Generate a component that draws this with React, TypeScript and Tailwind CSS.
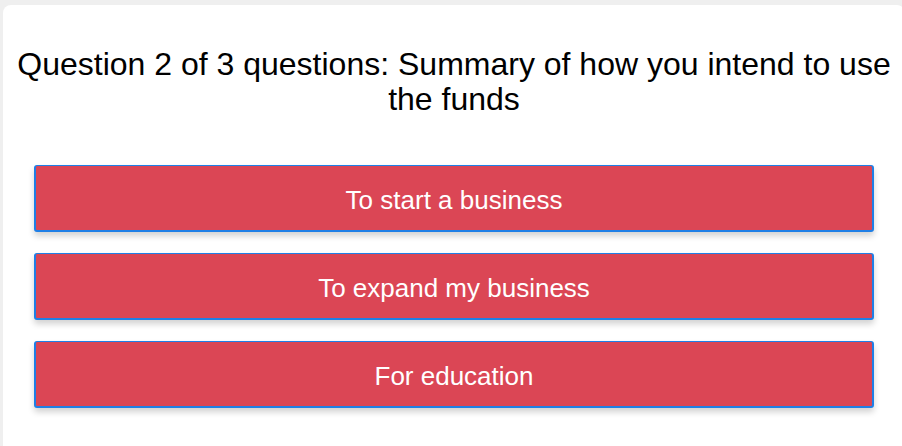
import React from "react";

const options = ["To start a business", "To expand my business", "For education"];

export default function App() {
  return (
    <div className="w-[902px] h-[446px] overflow-hidden bg-[#efefef] pt-[5px] pl-[3px]" style={{ fontFamily: '"Liberation Sans", Arial, sans-serif' }}>
      <div className="w-[902px] h-[460px] bg-white rounded-[8px] px-[31px] pt-[42px]">
        <h1 className="text-center text-[32px] leading-[35px] text-black -mx-[20px]">
          Question 2 of 3 questions: Summary of how you intend to use the funds
        </h1>
        <div className="mt-[48px] flex flex-col gap-[21px]">
          {options.map((o) => (
            <button
              key={o}
              className="h-[67px] w-[840px] bg-[#db4655] text-white text-[26px] pt-[5px] rounded-[3px] border-2 border-t border-[#1f7fe6] shadow-[0_4px_6px_rgba(0,0,0,0.18)]"
            >
              {o}
            </button>
          ))}
        </div>
      </div>
    </div>
  );
}
